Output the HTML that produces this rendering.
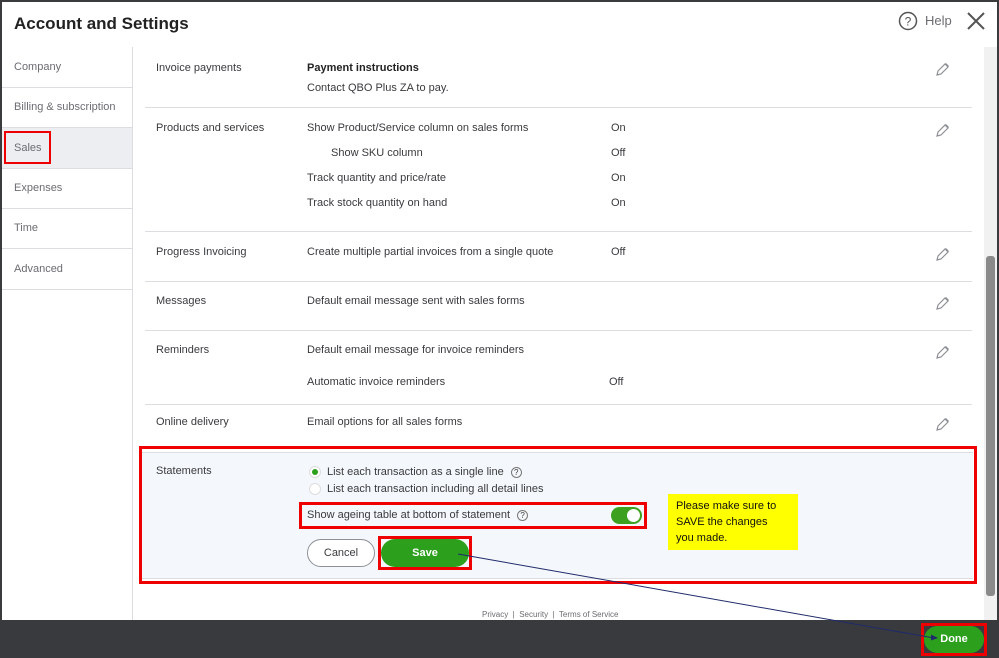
<!DOCTYPE html>
<html><head><style>
body{margin:0;width:999px;height:658px;position:relative;overflow:hidden;background:#fff;font-family:"Liberation Sans",sans-serif;color:#393a3d}
.a{position:absolute}
.t{font-size:11px;color:#393a3d;white-space:nowrap}
.nav{font-size:11px;color:#6b6c72}
.hl{height:1px;background:#dcdde0}
.pen{position:absolute;left:934px;width:16px;height:16px}
</style></head><body>
<div class="a" style="left:0;top:0;width:999px;height:2px;background:#3a3b3d"></div>
<div class="a" style="left:0;top:0;width:2px;height:620px;background:#3a3b3d"></div>
<div class="a" style="left:14px;top:14px;font-size:17px;font-weight:bold;color:#222">Account and Settings</div>
<svg class="a" style="left:898px;top:11px" width="20" height="20" viewBox="0 0 20 20"><circle cx="10" cy="10" r="8.5" fill="none" stroke="#555" stroke-width="1.5"/><text x="10" y="14.5" text-anchor="middle" font-size="12" font-family="Liberation Sans" fill="#555">?</text></svg>
<div class="a" style="left:925px;top:13px;font-size:13px;color:#6b6c72">Help</div>
<svg class="a" style="left:966px;top:11px" width="20" height="20"><path d="M2 2L18 18M18 2L2 18" stroke="#555" stroke-width="2"/></svg>
<!-- nav -->
<div class="a" style="left:132px;top:47px;width:1px;height:573px;background:#dcdde0"></div>
<div class="a nav" style="left:14px;top:61px">Company</div>
<div class="a hl" style="left:2px;top:87px;width:130px"></div>
<div class="a nav" style="left:14px;top:101px">Billing &amp; subscription</div>
<div class="a hl" style="left:2px;top:127px;width:130px"></div>
<div class="a" style="left:2px;top:128px;width:130px;height:40px;background:#eceef1"></div>
<div class="a nav" style="left:14px;top:142px">Sales</div>
<div class="a" style="left:4px;top:131px;width:47px;height:33px;border:2px solid #e00;box-sizing:border-box"></div>
<div class="a hl" style="left:2px;top:168px;width:130px"></div>
<div class="a nav" style="left:14px;top:182px">Expenses</div>
<div class="a hl" style="left:2px;top:208px;width:130px"></div>
<div class="a nav" style="left:14px;top:222px">Time</div>
<div class="a hl" style="left:2px;top:248px;width:130px"></div>
<div class="a nav" style="left:14px;top:263px">Advanced</div>
<div class="a hl" style="left:2px;top:289px;width:130px"></div>
<!-- rows -->
<div class="a t" style="left:156px;top:62px">Invoice payments</div>
<div class="a t" style="left:307px;top:62px;font-weight:bold;color:#222">Payment instructions</div>
<div class="a t" style="left:307px;top:82px">Contact QBO Plus ZA to pay.</div>
<div class="a hl" style="left:145px;top:107px;width:827px"></div>
<div class="a t" style="left:156px;top:122px">Products and services</div>
<div class="a t" style="left:307px;top:122px">Show Product/Service column on sales forms</div>
<div class="a t" style="left:611px;top:122px">On</div>
<div class="a t" style="left:331px;top:147px">Show SKU column</div>
<div class="a t" style="left:611px;top:147px">Off</div>
<div class="a t" style="left:307px;top:172px">Track quantity and price/rate</div>
<div class="a t" style="left:611px;top:172px">On</div>
<div class="a t" style="left:307px;top:197px">Track stock quantity on hand</div>
<div class="a t" style="left:611px;top:197px">On</div>
<div class="a hl" style="left:145px;top:231px;width:827px"></div>
<div class="a t" style="left:156px;top:246px">Progress Invoicing</div>
<div class="a t" style="left:307px;top:246px">Create multiple partial invoices from a single quote</div>
<div class="a t" style="left:611px;top:246px">Off</div>
<div class="a hl" style="left:145px;top:281px;width:827px"></div>
<div class="a t" style="left:156px;top:295px">Messages</div>
<div class="a t" style="left:307px;top:295px">Default email message sent with sales forms</div>
<div class="a hl" style="left:145px;top:330px;width:827px"></div>
<div class="a t" style="left:156px;top:344px">Reminders</div>
<div class="a t" style="left:307px;top:344px">Default email message for invoice reminders</div>
<div class="a t" style="left:307px;top:376px">Automatic invoice reminders</div>
<div class="a t" style="left:609px;top:376px">Off</div>
<div class="a hl" style="left:145px;top:404px;width:827px"></div>
<div class="a t" style="left:156px;top:416px">Online delivery</div>
<div class="a t" style="left:307px;top:416px">Email options for all sales forms</div>
<!-- pencils -->
<svg class="pen" style="top:62px" viewBox="0 0 16 16"><path d="M3 13l1-4 7-7 3 3-7 7z" fill="none" stroke="#8d9096" stroke-width="1.2"/><path d="M11 2l3 3 1-1-3-3z" fill="#8d9096"/></svg>
<svg class="pen" style="top:123px" viewBox="0 0 16 16"><path d="M3 13l1-4 7-7 3 3-7 7z" fill="none" stroke="#8d9096" stroke-width="1.2"/><path d="M11 2l3 3 1-1-3-3z" fill="#8d9096"/></svg>
<svg class="pen" style="top:247px" viewBox="0 0 16 16"><path d="M3 13l1-4 7-7 3 3-7 7z" fill="none" stroke="#8d9096" stroke-width="1.2"/><path d="M11 2l3 3 1-1-3-3z" fill="#8d9096"/></svg>
<svg class="pen" style="top:296px" viewBox="0 0 16 16"><path d="M3 13l1-4 7-7 3 3-7 7z" fill="none" stroke="#8d9096" stroke-width="1.2"/><path d="M11 2l3 3 1-1-3-3z" fill="#8d9096"/></svg>
<svg class="pen" style="top:345px" viewBox="0 0 16 16"><path d="M3 13l1-4 7-7 3 3-7 7z" fill="none" stroke="#8d9096" stroke-width="1.2"/><path d="M11 2l3 3 1-1-3-3z" fill="#8d9096"/></svg>
<svg class="pen" style="top:417px" viewBox="0 0 16 16"><path d="M3 13l1-4 7-7 3 3-7 7z" fill="none" stroke="#8d9096" stroke-width="1.2"/><path d="M11 2l3 3 1-1-3-3z" fill="#8d9096"/></svg>
<!-- statements -->
<div class="a" style="left:141px;top:452px;width:832px;height:125px;background:#f4f7fb;border-top:1px solid #dcdde0;border-bottom:1px solid #dcdde0"></div>
<div class="a" style="left:139px;top:446px;width:838px;height:138px;border:3px solid #e00;box-sizing:border-box"></div>
<div class="a t" style="left:156px;top:465px">Statements</div>
<div class="a" style="left:309px;top:466px;width:12px;height:12px;border-radius:50%;background:#fff;border:1px solid #ddd;box-sizing:border-box"></div>
<div class="a" style="left:312px;top:469px;width:6px;height:6px;border-radius:50%;background:#2ca01c"></div>
<div class="a t" style="left:327px;top:466px">List each transaction as a single line <span style="display:inline-block;width:9px;height:9px;border:1px solid #777;border-radius:50%;font-size:8px;text-align:center;line-height:9px;margin-left:4px">?</span></div>
<div class="a" style="left:309px;top:483px;width:12px;height:12px;border-radius:50%;background:#fff;border:1px solid #ddd;box-sizing:border-box"></div>
<div class="a t" style="left:327px;top:483px">List each transaction including all detail lines</div>
<div class="a" style="left:299px;top:502px;width:348px;height:27px;border:3px solid #e00;box-sizing:border-box"></div>
<div class="a t" style="left:307px;top:509px">Show ageing table at bottom of statement <span style="display:inline-block;width:9px;height:9px;border:1px solid #777;border-radius:50%;font-size:8px;text-align:center;line-height:9px;margin-left:4px">?</span></div>
<div class="a" style="left:611px;top:507px;width:31px;height:17px;border-radius:9px;background:#3da01e"></div>
<div class="a" style="left:627px;top:509px;width:13px;height:13px;border-radius:50%;background:#fff"></div>
<div class="a" style="left:307px;top:539px;width:68px;height:28px;border-radius:14px;border:1px solid #8d9096;box-sizing:border-box;background:#fff;font-size:11px;text-align:center;line-height:26px">Cancel</div>
<div class="a" style="left:378px;top:536px;width:94px;height:34px;border:3px solid #e00;box-sizing:border-box"></div>
<div class="a" style="left:381px;top:539px;width:88px;height:28px;border-radius:14px;background:#2ca01c;color:#fff;font-size:11px;font-weight:bold;text-align:center;line-height:28px">Save</div>
<div class="a" style="left:668px;top:494px;width:130px;height:56px;background:#ffff00;font-size:11px;color:#111;padding:4px 0 0 8px;box-sizing:border-box;line-height:16px">Please make sure to<br>SAVE the changes<br>you made.</div>
<div class="a" style="left:482px;top:610px;font-size:8px;color:#6b6c72">Privacy &nbsp;|&nbsp; Security &nbsp;|&nbsp; Terms of Service</div>
<!-- scrollbar -->
<div class="a" style="left:984px;top:47px;width:13px;height:573px;background:#f1f1f1"></div>
<div class="a" style="left:986px;top:256px;width:9px;height:340px;background:#8a8a8a;border-radius:3px"></div>
<div class="a" style="left:997px;top:0;width:2px;height:620px;background:#3a3b3d"></div>
<!-- bottom bar -->
<div class="a" style="left:0;top:620px;width:999px;height:38px;background:#393a3d"></div>
<div class="a" style="left:921px;top:623px;width:66px;height:33px;border:3px solid #e00;box-sizing:border-box"></div>
<div class="a" style="left:924px;top:626px;width:60px;height:27px;border-radius:14px;background:#2ca01c;color:#fff;font-size:11px;font-weight:bold;text-align:center;line-height:27px">Done</div>
<svg class="a" style="left:0;top:0" width="999" height="658"><line x1="458" y1="554" x2="934" y2="638" stroke="#1f2a6b" stroke-width="1"/><path d="M938 638l-7-3.5v6z" fill="#1f2a6b"/></svg>
</body></html>
